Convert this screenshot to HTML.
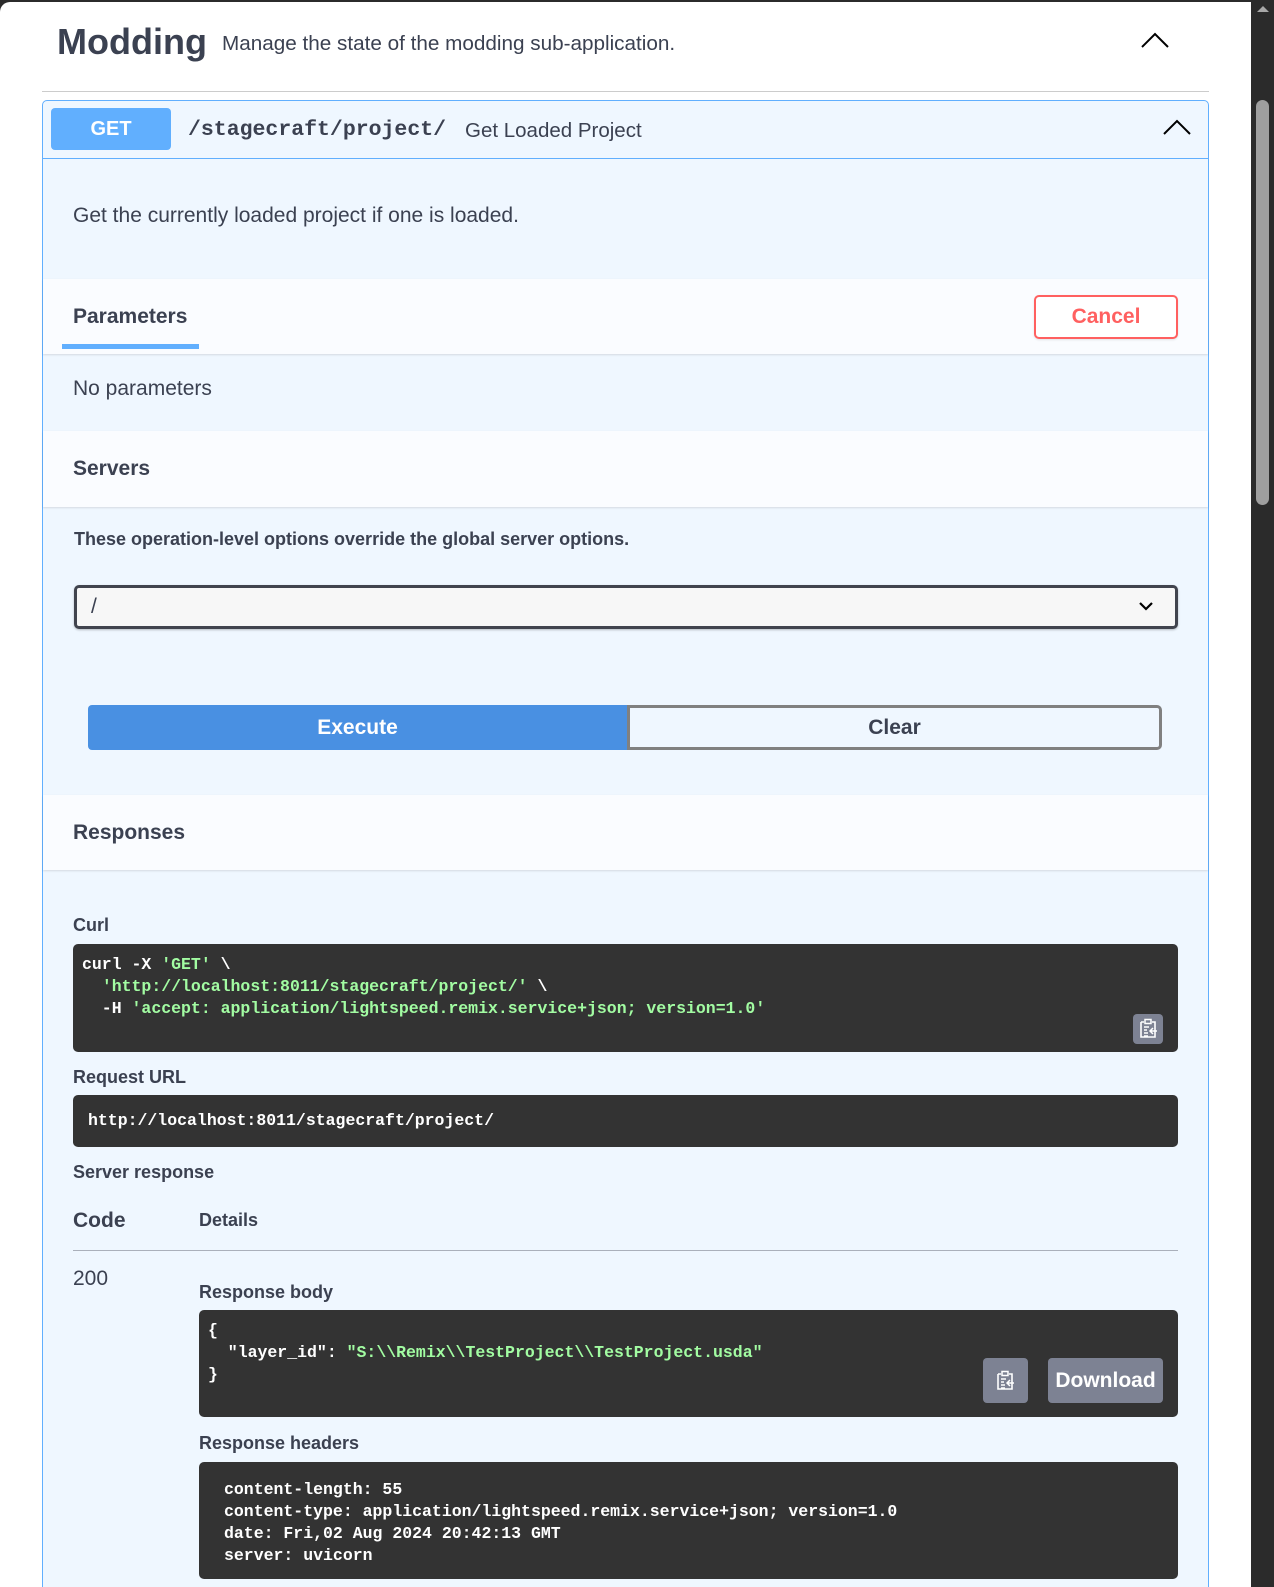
<!DOCTYPE html>
<html><head><meta charset="utf-8"><style>
*{margin:0;padding:0;box-sizing:border-box}
html,body{width:1274px;height:1587px;overflow:hidden}
body{background:#2b2b2b;font-family:"Liberation Sans",Arial,sans-serif;color:#3b4151;position:relative}
.page{position:absolute;left:0;top:2px;width:1251px;height:1585px;background:#fff;border-top-left-radius:10px;overflow:hidden}
.a{position:absolute;white-space:pre}
.mono{font-family:"Liberation Mono",monospace;font-weight:bold}
.code{position:absolute;background:#333;border-radius:5px;color:#fff;font-family:"Liberation Mono",monospace;font-weight:bold;font-size:16.5px;letter-spacing:0px;line-height:22px;white-space:pre}
.g{color:#a2fca2}
.band{position:absolute;left:43px;width:1165px;background:#fafcff;box-shadow:0 1px 2px rgba(0,0,0,.12)}
.h{font-weight:bold;font-size:21px}
.s{font-size:18px;font-weight:bold;line-height:22px}
.cp{position:absolute;background:#7d8293;border-radius:4px}
</style></head><body>
<div class="page">
<div class="a" style="left:57px;top:18px;font-size:36px;font-weight:bold;line-height:44px">Modding</div>
<div class="a" style="left:222px;top:30px;font-size:20.7px;line-height:24px">Manage the state of the modding sub-application.</div>
<svg class="a" style="left:1141px;top:30px" width="28" height="18"><path d="M1 15 L14 2 L27 15" fill="none" stroke="#000" stroke-width="2"/></svg>
<div class="a" style="left:42px;top:89px;width:1167px;height:1px;background:#ccc"></div>

<div class="a" style="left:42px;top:98px;width:1167px;height:1520px;background:#eff7ff;border:1px solid #61affe;border-radius:5px"></div>
<div class="a" style="left:43px;top:156px;width:1165px;height:1px;background:#61affe"></div>
<div class="a" style="left:51px;top:106px;width:120px;height:42px;background:#61affe;border-radius:4px;color:#fff;font-weight:bold;font-size:20px;line-height:42px;text-align:center">GET</div>
<div class="a mono" style="left:188px;top:114px;font-size:21.5px;line-height:28px;color:#3b4151">/stagecraft/project/</div>
<div class="a" style="left:465px;top:117px;font-size:20.5px;line-height:24px">Get Loaded Project</div>
<svg class="a" style="left:1163px;top:117px" width="28" height="18"><path d="M1 15 L14 2 L27 15" fill="none" stroke="#000" stroke-width="2"/></svg>

<div class="a" style="left:73px;top:202px;font-size:21px;line-height:24px">Get the currently loaded project if one is loaded.</div>

<div class="band" style="top:277px;height:75px"></div>
<div class="a h" style="left:73px;top:303px;line-height:24px">Parameters</div>
<div class="a" style="left:62px;top:342px;width:137px;height:5px;background:#61affe"></div>
<div class="a" style="left:1034px;top:293px;width:144px;height:44px;border:2px solid #ff6060;border-radius:5px;background:#fff;color:#ff6060;font-weight:bold;font-size:21px;line-height:40px;text-align:center;box-shadow:0 1px 2px rgba(0,0,0,.1)">Cancel</div>

<div class="a" style="left:73px;top:375px;font-size:21px;line-height:24px">No parameters</div>

<div class="band" style="top:429px;height:76px"></div>
<div class="a h" style="left:73px;top:455px;line-height:24px">Servers</div>
<div class="a s" style="left:74px;top:526px">These operation-level options override the global server options.</div>
<div class="a" style="left:74px;top:583px;width:1104px;height:44px;border:3px solid #41444e;border-radius:5px;background:#f7f7f7;box-shadow:0 1px 2px rgba(0,0,0,.25)"></div>
<div class="a" style="left:91px;top:593px;font-size:21px;line-height:24px">/</div>
<svg class="a" style="left:1138px;top:598px" width="16" height="12"><path d="M2 3 L8 9 L14 3" fill="none" stroke="#000" stroke-width="2.2"/></svg>

<div class="a" style="left:88px;top:703px;width:539px;height:45px;background:#4990e2;border-radius:4px 0 0 4px;color:#fff;font-weight:bold;font-size:21px;line-height:45px;text-align:center">Execute</div>
<div class="a" style="left:627px;top:703px;width:535px;height:45px;border:3px solid #808080;border-radius:0 5px 5px 0;color:#3b4151;font-weight:bold;font-size:21px;line-height:39px;text-align:center">Clear</div>

<div class="band" style="top:793px;height:75px"></div>
<div class="a h" style="left:73px;top:819px;line-height:24px">Responses</div>

<div class="a s" style="left:73px;top:912px">Curl</div>
<div class="code" style="left:73px;top:942px;width:1105px;height:108px;padding:10px 9px">curl -X <span class="g">'GET'</span> \
  <span class="g">'http://localhost:8011/stagecraft/project/'</span> \
  -H <span class="g">'accept: application/lightspeed.remix.service+json; version=1.0'</span></div>
<div class="cp" style="left:1133px;top:1012px;width:30px;height:30px"></div>
<svg class="a" style="left:1136px;top:1015px" width="24" height="24"><path d="M5 5h3M16 5h3v15H5V5" fill="none" stroke="#fff" stroke-width="1.6"/><rect x="9" y="2.5" width="6" height="4" fill="none" stroke="#fff" stroke-width="1.5"/><path d="M8 10h5M8 13h3M8 16h4M8 19h4M21 14h-7M17 11l-3 3 3 3" fill="none" stroke="#fff" stroke-width="1.5"/></svg>

<div class="a s" style="left:73px;top:1064px">Request URL</div>
<div class="code" style="left:73px;top:1093px;width:1105px;height:52px;padding:15px 15px">http://localhost:8011/stagecraft/project/</div>

<div class="a s" style="left:73px;top:1159px">Server response</div>
<div class="a" style="left:73px;top:1207px;font-size:21px;font-weight:bold;line-height:24px">Code</div>
<div class="a s" style="left:199px;top:1207px">Details</div>
<div class="a" style="left:73px;top:1248px;width:1105px;height:1px;background:#aab0bb"></div>
<div class="a" style="left:73px;top:1265px;font-size:21px;line-height:24px">200</div>
<div class="a s" style="left:199px;top:1279px">Response body</div>
<div class="code" style="left:199px;top:1308px;width:979px;height:107px;padding:10px 9px">{
  "layer_id": <span class="g">"S:\\Remix\\TestProject\\TestProject.usda"</span>
}</div>
<div class="cp" style="left:983px;top:1356px;width:45px;height:45px"></div>
<svg class="a" style="left:993px;top:1367px" width="24" height="24"><path d="M5 5h3M16 5h3v15H5V5" fill="none" stroke="#fff" stroke-width="1.6"/><rect x="9" y="2.5" width="6" height="4" fill="none" stroke="#fff" stroke-width="1.5"/><path d="M8 10h5M8 13h3M8 16h4M8 19h4M21 14h-7M17 11l-3 3 3 3" fill="none" stroke="#fff" stroke-width="1.5"/></svg>
<div class="cp" style="left:1048px;top:1356px;width:115px;height:45px;color:#fff;font-weight:bold;font-size:21px;line-height:45px;text-align:center">Download</div>

<div class="a s" style="left:199px;top:1430px">Response headers</div>
<div class="code" style="left:199px;top:1460px;width:979px;height:117px;padding:17px 25px">content-length: 55
content-type: application/lightspeed.remix.service+json; version=1.0
date: Fri,02 Aug 2024 20:42:13 GMT
server: uvicorn</div>
</div>
<div class="a" style="left:1256px;top:100px;width:13px;height:405px;background:#9f9f9f;border-radius:7px"></div>
<svg class="a" style="left:1256px;top:4px" width="14" height="10"><path d="M1 8 L7 2 L13 8Z" fill="#a8a8a8"/></svg>
</body></html>
